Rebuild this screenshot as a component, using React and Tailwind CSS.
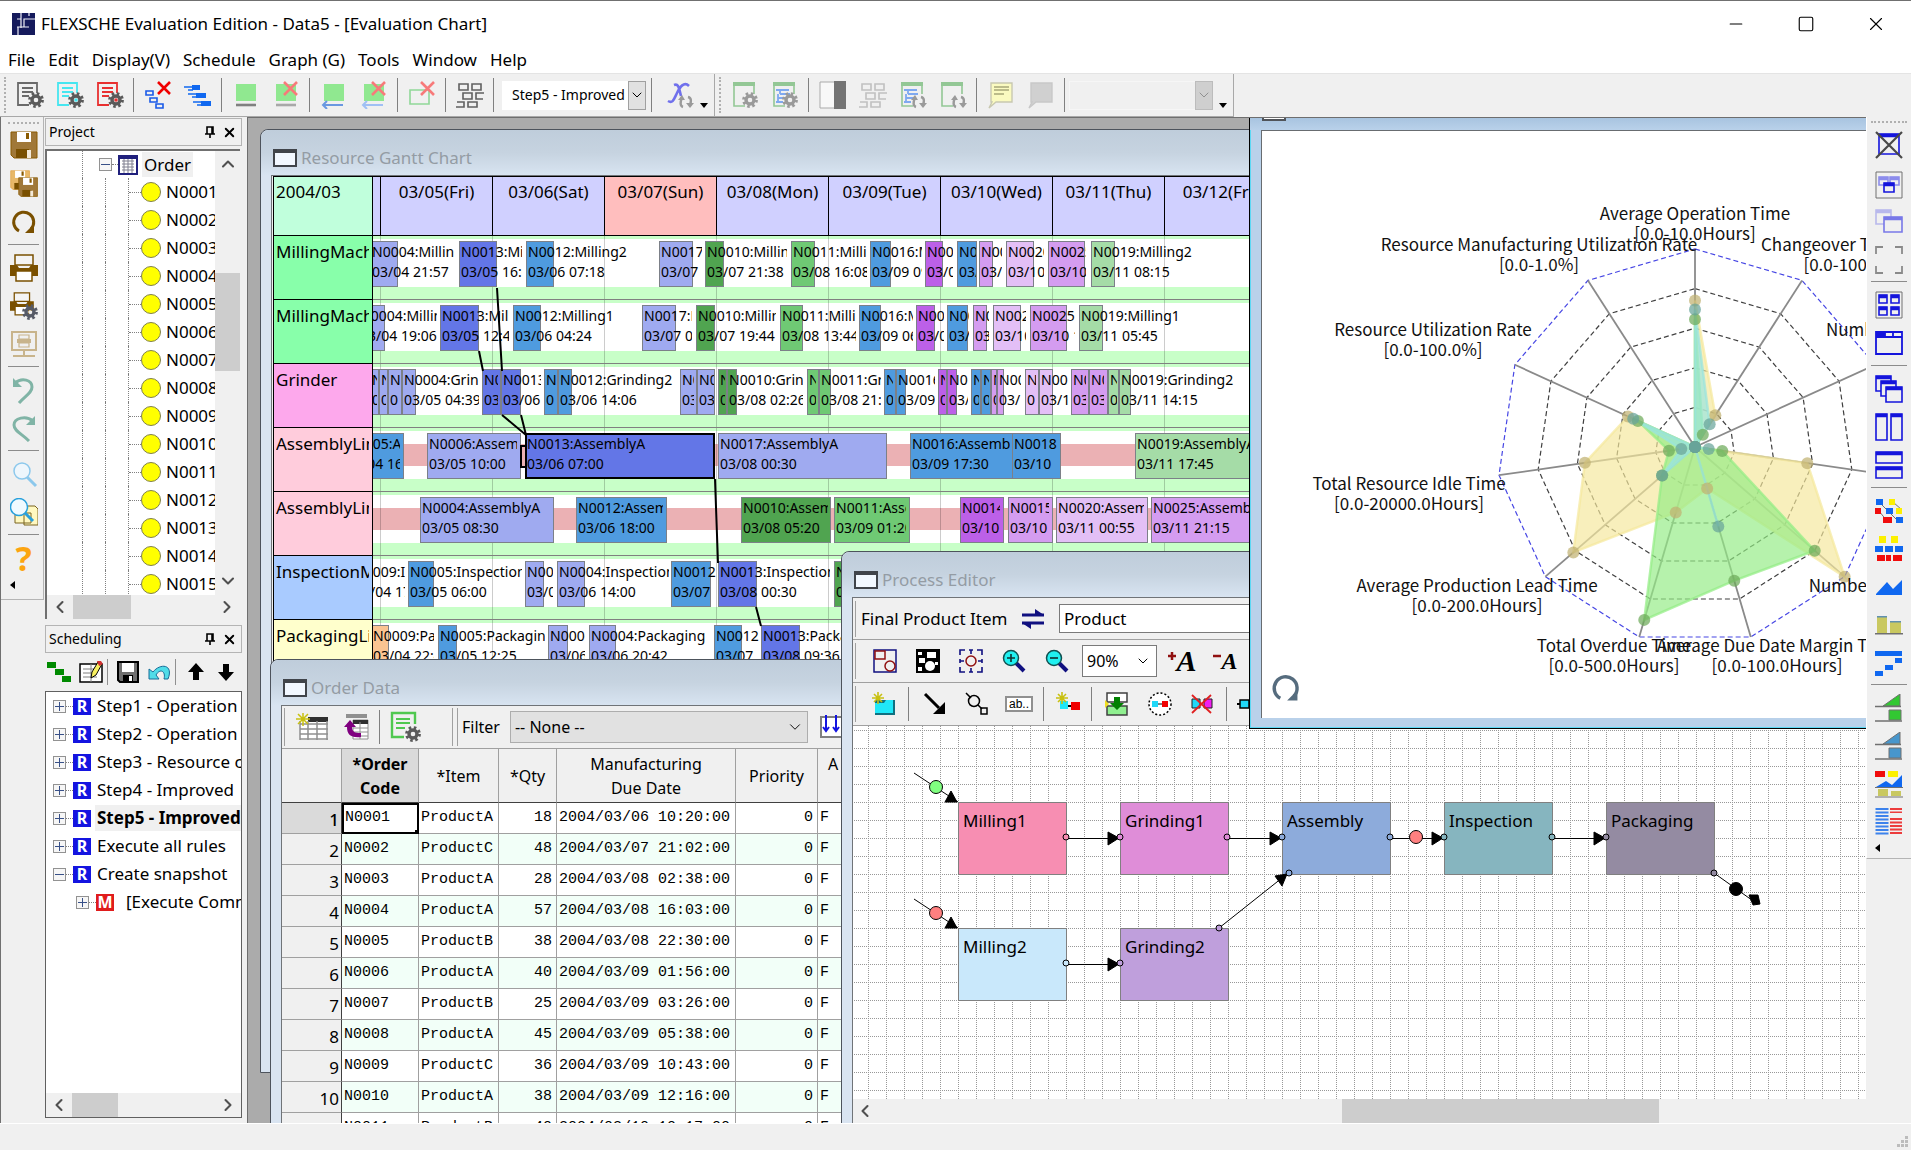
import { ChevronDown, ChevronLeft, ChevronRight, ChevronUp, Minus, Square, X } from 'lucide-react'

/* ---------- shared bits ---------- */

function Gear({ x, y, color = '#5a5a5a', hub = '#efefef' }) {
  return (
    <g transform={`translate(${x} ${y})`} fill="none" stroke={color}>
      <circle r="6.4" strokeWidth="3" strokeDasharray="2.5 2.53" />
      <circle r="4" strokeWidth="3.4" />
      <circle r="1.8" fill={hub} stroke="none" />
    </g>
  )
}

function Svg({ size = 'size-7', box = '0 0 28 28', children }) {
  return (
    <svg className={`${size} shrink-0`} viewBox={box} fill="none" aria-hidden="true">
      {children}
    </svg>
  )
}

function Tool({ label, className = 'h-[38px] w-10', children }) {
  return (
    <button type="button" title={label} aria-label={label} className={`flex shrink-0 items-center justify-center ${className}`}>
      {children}
    </button>
  )
}

function Cycle({ color = '#9a9a9a' }) {
  return (
    <g stroke={color} strokeWidth="2.4" fill={color}>
      <path d="M17 26c-3-1-3-5-1-9" fill="none" />
      <path d="M12 19l4-5 3 5z" stroke="none" />
      <path d="M22 16c4 1 3 5 2 8" fill="none" />
      <path d="M20 22h8l-4 5z" stroke="none" />
    </g>
  )
}

function RedX({ x = 15, y = 0, s = 12, color = '#f77a7a' }) {
  return <path d={`M${x} ${y}l${s} ${s}m0 -${s}l-${s} ${s}`} stroke={color} strokeWidth="2.6" />
}

/* ---------- main toolbar icons ---------- */

function DocGear({ color, hub, gear }) {
  return (
    <Svg>
      <path d="M21 12V2H2v22h11M6 7h11M6 11h11M6 15h7" stroke={color} strokeWidth="1.8" />
      <Gear x={20} y={19} hub={hub} color={gear} />
    </Svg>
  )
}

function Network({ color = '#606060' }) {
  return (
    <Svg>
      <path d="M3 3h9v6H3zM16 3h9v6h-9zM7 12h9v6H7zM28 12h-8v6h7M1 21h7v5H0M12 21h9v5h-9z" stroke={color} strokeWidth="1.6" />
    </Svg>
  )
}

function GreenBox({ base, crossed, arrow }) {
  return (
    <Svg>
      <path d="M4 3h20v17H4z" fill="#90e890" />
      {arrow ? (
        <path d="M3 24h20M7 20l-4 4 4 4" stroke={base} strokeWidth="2" />
      ) : (
        <path d="M4 24h20" stroke={base} strokeWidth="2.6" />
      )}
      {crossed && <RedX x={12} y={1} s={13} />}
    </Svg>
  )
}

function GreenWin({ gantt, cycle }) {
  return (
    <Svg>
      <path d="M23 13V2H3v23h11" stroke="#93c795" strokeWidth="1.6" />
      <path d="M2 1h22v4H2z" fill="#93c795" />
      {gantt && <path d="M5 9h13M9 13h10M9 9v4M7 17h8M5 21h7M7 13v8" stroke="#7fa9f0" strokeWidth="1.8" />}
      {cycle ? <Cycle /> : <Gear x={19} y={19} color="#9a9a9a" />}
    </Svg>
  )
}

function Bubble({ fill, stroke, lines }) {
  return (
    <Svg>
      <path d="M4 2h21v19H9l-7 6 3-6H4z" fill={fill} stroke={stroke} strokeWidth="1.4" />
      {lines && <path d="M7 6h15M7 9h15M7 13h10" stroke="#a8a878" strokeWidth="1.5" />}
    </Svg>
  )
}

function VSep() {
  return <span className="mx-[3px] h-[34px] w-0.5 shrink-0 border-l border-[#808080]" />
}

function Drop({ label, options, className, iconClass }) {
  return (
    <span className="relative flex shrink-0">
      <select aria-label={label} className={`appearance-none ${className}`}>
        {options.map((o) => (
          <option key={o}>{o}</option>
        ))}
      </select>
      <span className={`pointer-events-none absolute inset-y-0 right-0 flex items-center justify-center ${iconClass}`}>
        <ChevronDown size={16} strokeWidth={1.5} />
      </span>
    </span>
  )
}

function Grip() {
  return <span className="h-9 w-0 shrink-0 border-l-2 border-dotted border-[#b0b0b0]" />
}

function MainToolbar() {
  return (
    <div className="flex h-11 shrink-0 items-center overflow-hidden border-t border-[#e4e4e4] bg-[#f0f0f0]">
      <div className="flex h-full items-center border-r border-b border-[#a8a8a8] pl-1">
        <Grip />
        <span className="w-1" />
        <Tool label="Settings"><DocGear color="#6a6a6a" /></Tool>
        <Tool label="Display settings"><DocGear color="#46e6f0" hub="#46e6f0" /></Tool>
        <Tool label="Rule settings"><DocGear color="#e83030" hub="#e83030" /></Tool>
        <VSep />
        <Tool label="Clear links">
          <Svg>
            <path d="M2 10h7v4H2zM6 17h7v4H6zM12 23h7v4h-7z" stroke="#1a5ae8" strokeWidth="1.6" />
            <RedX x={14} y={1} s={12} color="#f00000" />
          </Svg>
        </Tool>
        <Tool label="Reschedule">
          <Svg>
            <path d="M8 4h8v5H8zM12 12h10v5H12zM17 20h10v5H17z" fill="#1068f0" />
            <path d="M0 6h8M4 9h5M4 13h8M8 16h5M9 21h9M13 24h5" stroke="#1068f0" strokeWidth="1.5" />
          </Svg>
        </Tool>
        <VSep />
        <Tool label="Assign"><GreenBox base="#808080" /></Tool>
        <Tool label="Unassign"><GreenBox base="#a8a8a8" crossed /></Tool>
        <VSep />
        <Tool label="Fix start"><GreenBox base="#6a98e0" arrow /></Tool>
        <Tool label="Unfix start"><GreenBox base="#a0c0f4" arrow crossed /></Tool>
        <VSep />
        <Tool label="Clear frame">
          <Svg>
            <path d="M2 9h19v14H2z" stroke="#90d898" strokeWidth="1.6" />
            <RedX x={13} y={1} s={13} />
          </Svg>
        </Tool>
        <VSep />
        <Tool label="Operation network"><Network /></Tool>
        <VSep />
        <span className="w-1" />
        <Drop
          label="Scheduling rule"
          options={['Step5 - Improved']}
          className="h-[29px] w-36 bg-white pl-2.5 text-sm"
          iconClass="w-[18px] border border-[#a0a0a0] bg-[#e1e1e1]"
        />
        <span className="w-0.5" />
        <VSep />
        <Tool label="Expression" className="ml-1 h-[38px] w-10">
          <Svg>
            <path d="M2 20c5 3 6-2 9-8S18 0 23 5M8 4c5-2 5 4 7 11" stroke="#7070ec" strokeWidth="2.6" />
            <Cycle />
          </Svg>
        </Tool>
        <span className="mt-5 mr-1.5 border-x-4 border-t-5 border-x-transparent border-t-black" />
      </div>
      <div className="flex h-full items-center border-r border-b border-[#a8a8a8] pl-1">
        <Grip />
        <span className="w-1" />
        <Tool label="View settings"><GreenWin /></Tool>
        <Tool label="Gantt settings"><GreenWin gantt /></Tool>
        <VSep />
        <Tool label="Contrast">
          <Svg>
            <path d="M1 1h15v26H1z" fill="#f8f8f8" stroke="#aaa" />
            <path d="M15 0h12v28H15z" fill="#747474" />
          </Svg>
        </Tool>
        <Tool label="Network view"><Network color="#c0c0c0" /></Tool>
        <Tool label="Sync Gantt"><GreenWin gantt cycle /></Tool>
        <Tool label="Sync view"><GreenWin cycle /></Tool>
        <VSep />
        <Tool label="Comment"><Bubble fill="#fafac0" stroke="#c8c8b0" lines /></Tool>
        <Tool label="Hide comment"><Bubble fill="#d0d0d0" stroke="#c8c8c8" /></Tool>
        <VSep />
        <Drop
          label="View"
          options={[' ']}
          className="h-[29px] w-36 border border-[#f6f6f6] bg-[#f0f0f0]"
          iconClass="w-[18px] border border-[#bcbcbc] bg-[#cfcfcf] text-[#909090]"
        />
        <span className="mt-5 mr-1.5 ml-1.5 border-x-4 border-t-5 border-x-transparent border-t-black" />
      </div>
    </div>
  )
}

/* ---------- left tool strip ---------- */

function HSep() {
  return <span className="mx-1 my-[3px] h-0.5 shrink-0 border-t border-[#8c8c8c]" />
}

function Floppy({ x = 0, y = 0, s = 1, light }) {
  return (
    <g transform={`translate(${x} ${y}) scale(${s})`}>
      <path d="M1 1h26v26H4l-3-3z" fill={light ? '#e8b868' : '#a07838'} stroke={light ? '#e0a040' : '#8a5a00'} />
      <path d="M7 1h14v10H7z" fill="#fff" />
      <path d="M16 2h3v6h-3z" fill="#8a5a00" />
      <path d="M6 18h13v9H6z" fill="#7a5000" />
      <path d="M17 19h4v8h-4z" fill="#f4ead8" />
    </g>
  )
}

function Printer({ x = 0, y = 0, s = 1 }) {
  return (
    <g transform={`translate(${x} ${y}) scale(${s})`}>
      <path d="M5 1h18v10H5z" fill="#f4f4f4" stroke="#7a5000" strokeWidth="1.5" />
      <path d="M0 11h7l2 3h10l2-3h7v11H0z" fill="#7a5000" />
      <path d="M6 17h16v10H6z" fill="#fff" stroke="#7a5000" strokeWidth="1.5" />
    </g>
  )
}

function Reload({ color }) {
  return (
    <>
      <path d="M9 23A10 10 0 1 1 21 21" stroke={color} strokeWidth="3" />
      <path d="M15 25h9v-9z" fill={color} />
    </>
  )
}

function LeftTools() {
  return (
    <div className="flex w-11 shrink-0 flex-col border-l border-[#707070]">
      <div className="flex flex-col border-r border-b border-[#b4b4b4] pt-[5px] pb-1 pl-[3px]">
        <span className="mx-1 h-0 border-t-2 border-dotted border-[#b0b0b0]" />
        <Tool label="Save" className="h-[41px]"><Svg><Floppy /></Svg></Tool>
        <Tool label="Save all" className="h-[38px]"><Svg><Floppy s={0.72} light /><Floppy x={8} y={7} s={0.72} /></Svg></Tool>
        <Tool label="Reload" className="h-[38px]"><Svg><Reload color="#7a5000" /></Svg></Tool>
        <HSep />
        <Tool label="Print" className="h-[38px]"><Svg><Printer /></Svg></Tool>
        <Tool label="Print settings" className="h-[38px]"><Svg><Printer s={0.85} /><Gear x={20} y={20} color="#565a66" /></Svg></Tool>
        <Tool label="Print preview" className="h-[38px]">
          <Svg>
            <g stroke="#c8b48c" strokeWidth="2">
              <path d="M2 2h24v18H2zM14 20v5M3 26h22" />
              <path d="M9 5h10v4H9zM9 13h10v4H9z" strokeWidth="1.2" />
              <path d="M7 11h14" strokeWidth="4" />
            </g>
          </Svg>
        </Tool>
        <HSep />
        <Tool label="Undo" className="h-[38px]">
          <Svg><path d="M5 7c7-6 17-3 17 4 0 6-7 9-13 16" stroke="#80b4a6" strokeWidth="3" /><path d="M3 2v9h9z" fill="#80b4a6" /></Svg>
        </Tool>
        <Tool label="Redo" className="h-[38px]">
          <Svg><path d="M23 7C16 1 4 4 4 11c0 6 8 9 15 16" stroke="#80b4a6" strokeWidth="3" /><path d="M25 2v9h-9z" fill="#80b4a6" /></Svg>
        </Tool>
        <HSep />
        <Tool label="Find" className="h-[38px]">
          <Svg><circle cx="12" cy="11" r="8" fill="#eef6fc" stroke="#8cc8ec" strokeWidth="1.5" /><path d="M17 17l9 9" stroke="#8cc8ec" strokeWidth="3" /></Svg>
        </Tool>
        <Tool label="Find in data" className="h-[38px]">
          <Svg>
            <path d="M14 8h11l3 3v16H14zM5 15h16v10H5z" fill="#fff8c0" stroke="#7a6420" />
            <circle cx="9" cy="9" r="8.5" fill="#f0faff" stroke="#28a0dc" strokeWidth="1.5" /><path d="M15 15l8 8" stroke="#28a0dc" strokeWidth="3" />
          </Svg>
        </Tool>
        <HSep />
        <Tool label="Help" className="h-[38px] text-[34px] font-bold text-[#fca510]">?</Tool>
        <span className="mt-1 mb-1.5 ml-1.5 w-0 border-y-4 border-r-5 border-y-transparent border-r-black" />
      </div>
    </div>
  )
}

/* ---------- docked panels ---------- */

function PanelHead({ title }) {
  return (
    <div className="flex h-7 shrink-0 items-center border border-[#b4b4b4] bg-[#f0f0f0] pl-[3px]">
      <h2 className="flex-1 text-sm">{title}</h2>
      <button type="button" aria-label="Pin" className="mr-1">
        <Svg size="size-4" box="0 0 16 16">
          <path d="M5 3h6v7H5zM3 10h10M8 10v4M10 3v7" stroke="#000" strokeWidth="1.6" />
        </Svg>
      </button>
      <button type="button" aria-label="Close panel" className="mr-1"><X size={15} strokeWidth={3} /></button>
    </div>
  )
}

function Expander({ open }) {
  return (
    <button type="button" aria-label={open ? 'Collapse' : 'Expand'} className="flex size-[13px] shrink-0 items-center justify-center border border-[#929292] bg-[#f6f6f6]">
      <Svg size="size-[11px]" box="0 0 11 11">
        <path d={open ? 'M1 5.5h9' : 'M1 5.5h9M5.5 1v9'} stroke="#385088" />
      </Svg>
    </button>
  )
}

function HScroll({ thumb, pad = 'w-6' }) {
  return (
    <div className="flex h-6 shrink-0 items-center bg-[#f0f0f0] text-[#505050]">
      <button type="button" aria-label="Scroll left" className={`flex justify-center ${pad}`}><ChevronLeft size={20} strokeWidth={2.5} /></button>
      <span className="relative h-full flex-1"><span className={`absolute inset-y-0 bg-[#cdcdcd] ${thumb}`} /></span>
      <button type="button" aria-label="Scroll right" className={`flex justify-center ${pad}`}><ChevronRight size={20} strokeWidth={2.5} /></button>
    </div>
  )
}

const orders = Array.from({ length: 15 }, (_, i) => 'N' + String(i + 1).padStart(4, '0'))

function ProjectPanel() {
  return (
    <section className="flex h-[501px] shrink-0 flex-col">
      <PanelHead title="Project" />
      <div className="mt-[3px] mr-0.5 flex min-h-0 flex-1 flex-col border-t-2 border-l-2 border-[#707070] bg-white">
        <div className="flex min-h-0 flex-1">
          <ul className="min-w-0 flex-1 overflow-hidden text-[17px]">
            <li className="flex h-[27px] items-center">
              <span className="w-[35px] shrink-0" />
              <span className="h-full w-[17px] shrink-0 border-l border-dotted border-[#808080]" />
              <Expander open />
              <span className="w-1.5 shrink-0 border-t border-dotted border-[#808080]" />
              <Svg size="size-5" box="0 0 20 20">
                <path d="M1 1h18v18H1z" fill="#fff" stroke="#20207c" strokeWidth="2" />
                <path d="M2 3h16" stroke="#20207c" strokeWidth="2" />
                <path d="M4 6h12M4 9h12M4 12h12M4 15h12M6 4v14M10 4v14M14 4v14" stroke="#808090" />
              </Svg>
              <span className="ml-1 bg-[#f0f0f0] px-0.5">Order</span>
            </li>
            {orders.map((o) => (
              <li key={o} className="flex h-7 items-center">
                <span className="w-[35px] shrink-0" />
                <span className="h-full w-[23px] shrink-0 border-l border-dotted border-[#808080]" />
                <span className="h-full w-[23px] shrink-0 border-l border-dotted border-[#808080]" />
                <span className="h-full w-px shrink-0 border-l border-dotted border-[#808080]" />
                <span className="w-3 shrink-0 border-t border-dotted border-[#808080]" />
                <span className="size-5 shrink-0 rounded-full border border-[#80804c] bg-[#ff0]" />
                <span className="ml-[5px]">{o}</span>
              </li>
            ))}
          </ul>
          <div className="flex w-[25px] shrink-0 flex-col bg-[#f0f0f0] text-[#505050]">
            <button type="button" aria-label="Scroll up" className="flex h-6 items-center justify-center pt-0.5"><ChevronUp size={20} strokeWidth={2.5} /></button>
            <span className="relative flex-1"><span className="absolute inset-x-0 top-1/4 h-1/4 bg-[#cdcdcd]" /></span>
            <button type="button" aria-label="Scroll down" className="flex h-7 items-center justify-center"><ChevronDown size={20} strokeWidth={2.5} /></button>
          </div>
        </div>
        <HScroll thumb="left-0 w-[58px]" pad="w-[26px]" />
      </div>
    </section>
  )
}

const rules = [
  'Step1 - Operation',
  'Step2 - Operation',
  'Step3 - Resource c',
  'Step4 - Improved',
  'Step5 - Improved',
  'Execute all rules',
  'Create snapshot',
]

function SchedulingPanel() {
  return (
    <section className="mt-1.5 mb-[5px] flex min-h-0 flex-1 flex-col">
      <PanelHead title="Scheduling" />
      <div className="flex h-[38px] shrink-0 items-center justify-between px-0.5">
        <Tool label="Run rules" className="w-6">
          <Svg size="size-6" box="0 0 24 24"><path d="M0 2h9v6H0zM8 9h9v6H8zM15 16h9v6h-9z" fill="#008a00" /></Svg>
        </Tool>
        <Tool label="Edit rule" className="ml-1 w-7">
          <Svg size="size-6" box="0 0 24 24">
            <path d="M1 4h22v18H1z" fill="#fff" stroke="#000" strokeWidth="1.5" />
            <path d="M4 9h12M4 13h10M4 17h14M12 4v18" stroke="#808080" />
            <path d="M12 18l1-6 6-10 4 2-6 11z" fill="#f8f060" stroke="#000" />
            <path d="M18 1h4l2 3-4 2z" fill="#d03030" />
          </Svg>
        </Tool>
        <span className="h-[26px] w-px bg-[#909090]" />
        <Tool label="Save rule" className="ml-1 w-7">
          <Svg size="size-6" box="0 0 24 24">
            <path d="M2 2h20v20H4l-2-2z" fill="#707070" stroke="#000" strokeWidth="2" />
            <path d="M6 3h12v9H6z" fill="#fff" /><path d="M7 15h10v7H7z" fill="#000" /><path d="M13 16h3v5h-3z" fill="#fff" />
          </Svg>
        </Tool>
        <Tool label="Revert rule" className="w-7">
          <Svg size="size-6" box="0 0 24 24">
            <path d="M2 9v10h10l-3-4C13 8 19 11 17 19h4C27 4 13 3 6 12z" fill="#50dce8" stroke="#186c98" />
          </Svg>
        </Tool>
        <span className="h-[26px] w-px bg-[#909090]" />
        <Tool label="Move up" className="ml-1 w-7"><Svg size="size-6" box="0 0 24 24"><path d="M12 3l8 9h-5v8H9v-8H4z" fill="#000" /></Svg></Tool>
        <Tool label="Move down" className="w-7"><Svg size="size-6" box="0 0 24 24"><path d="M12 21l8-9h-5V4H9v8H4z" fill="#000" /></Svg></Tool>
      </div>
      <div className="flex min-h-0 flex-1 flex-col justify-between border border-[#606060] bg-white">
        <ul className="overflow-hidden text-[17px]">
          {rules.map((r, i) => (
            <li key={r} className="flex h-7 items-center whitespace-nowrap">
              <span className="w-[7px] shrink-0" />
              <Expander open={i === 6} />
              <span className="w-[7px] shrink-0 border-t border-dotted border-[#808080]" />
              <span className="flex h-[17px] w-[18px] shrink-0 items-center justify-center bg-[#1414e0] text-base font-bold text-white">R</span>
              <span className={i === 4 ? 'ml-1 flex-1 bg-[#f0f0f0] pl-0.5 font-bold' : 'ml-1 pl-0.5'}>{r}</span>
            </li>
          ))}
          <li className="flex h-7 items-center whitespace-nowrap">
            <span className="w-[30px] shrink-0" />
            <Expander />
            <span className="w-[7px] shrink-0 border-t border-dotted border-[#808080]" />
            <span className="flex h-[17px] w-[18px] shrink-0 items-center justify-center bg-[#e01c1c] text-base font-bold text-white">M</span>
            <span className="ml-3">[Execute Comm</span>
          </li>
        </ul>
        <HScroll thumb="left-0 w-[46px]" pad="w-[26px]" />
      </div>
    </section>
  )
}

/* ---------- MDI child windows ---------- */

function MdiWindow({ title, place, children }) {
  return (
    <section className={`absolute flex flex-col rounded-t-lg border border-[#4d535c] bg-[#d9e4f1] ${place}`}>
      <header className="flex h-[45px] shrink-0 items-center gap-1 rounded-t-lg bg-linear-to-b from-[#bfcddb] via-[#c6d3e0] to-[#d8e4f1] pt-2.5 pl-3">
        <span className="h-[18px] w-6 border-2 border-t-4 border-[#40444a] bg-[#f2f8ff]" />
        <h2 className="text-[17px] text-[#949ca4]">{title}</h2>
      </header>
      <div className="ml-[10px] flex min-h-0 flex-1 flex-col overflow-hidden border-t border-l border-[#707478] bg-[#f0f0f0]">{children}</div>
    </section>
  )
}

const LAV = '#9faaf0'
const IND = '#6376e7'
const BLU = '#4f9bdf'
const DGR = '#50a450'
const GRN = '#6fc974'
const PUR = '#bc60e8'
const VIO = '#d49cf0'
const PIN = '#e3bff6'
const LGR = '#a5dca7'
const ORA = '#fac492'

const days = ['03/05(Fri)', '03/06(Sat)', '03/07(Sun)', '03/08(Mon)', '03/09(Tue)', '03/10(Wed)', '03/11(Thu)', '03/12(Fri)']

// bar: [left, bar width, clip width, colour, first line, second line]
const resources = [
  { name: 'MillingMachine1', bg: 'bg-[#88ffaa]', bars: [
    [-3, 28, 82, LAV, 'N0004:Milling2', '03/04 21:57'], [86, 38, 61, IND, 'N0013:Milling2', '03/05 16:09'], [153, 28, 120, BLU, 'N0012:Milling2', '03/06 07:18'],
    [286, 34, 41, LAV, 'N0017:Milling2', '03/07 09:10'], [332, 19, 80, DGR, 'N0010:Milling2', '03/07 21:38'], [418, 24, 74, GRN, 'N0011:Milling2', '03/08 16:08'],
    [497, 21, 50, BLU, 'N0016:Milling2', '03/09 09:20'], [552, 18, 26, PUR, 'N0014:Milling2', '03/09 20:00'], [584, 20, 17, BLU, 'N0018:Milling2', '03/10 03:00'],
    [606, 14, 21, VIO, 'N0015:Milling2', '03/10 07:00'], [633, 28, 36, PIN, 'N0020:Milling2', '03/10 13:00'], [675, 37, 36, VIO, 'N0025:Milling2', '03/10 22:00'],
    [718, 24, 120, LGR, 'N0019:Milling2', '03/11 08:15'],
  ] },
  { name: 'MillingMachine2', bg: 'bg-[#88ffaa]', bars: [
    [-15, 27, 77, LAV, 'N0004:Milling1', '03/04 19:06'], [67, 39, 67, IND, 'N0013:Milling1', '03/05 12:40'], [140, 28, 120, BLU, 'N0012:Milling1', '03/06 04:24'],
    [269, 34, 48, LAV, 'N0017:Milling1', '03/07 07:00'], [323, 19, 78, DGR, 'N0010:Milling1', '03/07 19:44'], [407, 23, 74, GRN, 'N0011:Milling1', '03/08 13:44'],
    [486, 22, 52, BLU, 'N0016:Milling1', '03/09 06:00'], [543, 19, 26, PUR, 'N0014:Milling1', '03/09 18:00'], [574, 21, 20, BLU, 'N0018:Milling1', '03/10 01:00'],
    [600, 14, 14, VIO, 'N0015:Milling1', '03/10 04:00'], [620, 28, 31, PIN, 'N0020:Milling1', '03/10 10:00'], [657, 37, 43, VIO, 'N0025:Milling1', '03/10 18:00'],
    [706, 24, 120, LGR, 'N0019:Milling1', '03/11 05:45'],
  ] },
  { name: 'Grinder', bg: 'bg-[#fda8ec]', bars: [
    [-3, 9, 5, LAV, 'N', '0'], [6, 9, 5, LAV, 'N', '0'], [15, 14, 10, LAV, 'N', '0'], [29, 14, 75, LAV, 'N0004:Grinding', '03/05 04:39'],
    [109, 19, 14, IND, 'N0013', '03/05'], [128, 20, 38, IND, 'N0013:', '03/06 02'], [171, 14, 10, BLU, 'N', '0'], [185, 14, 125, BLU, 'N0012:Grinding2', '03/06 14:06'],
    [307, 17, 12, LAV, 'N0', '03'], [324, 18, 15, LAV, 'N00', '03'], [345, 9, 5, DGR, 'N', '0'], [354, 10, 74, DGR, 'N0010:Grinding', '03/08 02:26'],
    [434, 12, 7, GRN, 'N', '0'], [446, 12, 60, GRN, 'N0011:Grinding', '03/08 21:10'], [511, 12, 7, BLU, 'N', '0'], [523, 10, 37, BLU, 'N0016:', '03/09 12'],
    [565, 9, 5, PUR, 'N', '0'], [574, 10, 19, PUR, 'N0014', '03/10'], [598, 10, 6, BLU, 'N', '0'], [608, 10, 6, BLU, 'N', '0'],
    [618, 6, 3, VIO, 'N', '0'], [624, 7, 22, VIO, 'N0015', '03/10'], [652, 14, 9, PIN, 'N', '0'], [666, 14, 27, PIN, 'N0020', '03/11'],
    [698, 18, 13, VIO, 'N00', '03'], [716, 19, 13, VIO, 'N00', '03'], [735, 11, 7, LGR, 'N', '0'], [746, 12, 125, LGR, 'N0019:Grinding2', '03/11 14:15'],
  ] },
  { name: 'AssemblyLine1', bg: 'bg-[#ffccdc]', band: true, bars: [
    [-29, 60, 54, BLU, 'N0005:AssemblyB', '03/04 16:00'], [54, 94, 88, LAV, 'N0006:AssemblyA', '03/05 10:00'], [152, 190, 186, IND, 'N0013:AssemblyA', '03/06 07:00', true],
    [345, 169, 166, LAV, 'N0017:AssemblyA', '03/08 00:30'], [537, 103, 98, BLU, 'N0016:AssemblyB', '03/09 17:30'], [639, 49, 43, BLU, 'N0018:', '03/10 '],
    [762, 160, 156, LGR, 'N0019:AssemblyA', '03/11 17:45'],
  ] },
  { name: 'AssemblyLine2', bg: 'bg-[#ffccdc]', band: true, bars: [
    [47, 134, 131, LAV, 'N0004:AssemblyA', '03/05 08:30'], [203, 91, 85, BLU, 'N0012:AssemblyB', '03/06 18:00'], [368, 90, 85, DGR, 'N0010:AssemblyC', '03/08 05:20'],
    [461, 76, 70, GRN, 'N0011:AssemblyC', '03/09 01:20'], [587, 44, 38, PUR, 'N0014:', '03/10'], [635, 45, 39, VIO, 'N0015:', '03/10'],
    [683, 92, 86, PIN, 'N0020:AssemblyC', '03/11 00:55'], [778, 160, 156, VIO, 'N0025:AssemblyC', '03/11 21:15'],
  ] },
  { name: 'InspectionMachine', bg: 'bg-[#a9cbff]', bars: [
    [-21, 10, 51, LAV, 'N0009:Inspection', '03/04 17:40'], [35, 26, 112, BLU, 'N0005:Inspection', '03/05 06:00'], [152, 19, 26, LAV, 'N0006', '03/06'],
    [184, 28, 110, LAV, 'N0004:Inspection', '03/06 14:00'], [298, 40, 43, BLU, 'N0012', '03/07'], [345, 39, 110, IND, 'N0013:Inspection', '03/08 00:30'],
    [461, 30, 60, DGR, 'N0010', '03/09'],
  ] },
  { name: 'PackagingLine', bg: 'bg-[#ffffcc]', bars: [
    [-2, 18, 61, ORA, 'N0009:Packaging', '03/04 22:40'], [65, 19, 105, BLU, 'N0005:Packaging', '03/05 12:25'], [175, 20, 35, LAV, 'N0006', '03/06'],
    [216, 27, 120, LAV, 'N0004:Packaging', '03/06 20:42'], [341, 28, 44, BLU, 'N0012', '03/07'], [388, 39, 120, IND, 'N0013:Packaging', '03/08 09:36'],
  ] },
]

function DayGrid() {
  return (
    <div className="absolute inset-0 flex">
      <span className="w-[7px] shrink-0" />
      {days.map((d) => (
        <span key={d} className="w-28 shrink-0 border-l border-black/20" />
      ))}
    </div>
  )
}

function GanttWindow() {
  return (
    <MdiWindow title="Resource Gantt Chart" place="left-3 top-[11px] bottom-[50px] w-[1100px]">
      <div className="relative ml-px flex-1 border-t border-l border-black bg-white">
        <div className="flex h-[59px] border-b border-black text-[17px]">
          <div className="w-[99px] shrink-0 border-r border-black bg-[#c0ffdc] pt-0.5 pl-0.5">2004/03</div>
          <div className="w-[7px] shrink-0 bg-[#d0d0ff]" />
          {days.map((d) => (
            <div key={d} className={`w-28 shrink-0 border-l border-black pt-0.5 text-center ${d.includes('Sun') ? 'bg-[#ffbebe]' : 'bg-[#d0d0ff]'}`}>{d}</div>
          ))}
        </div>
        {resources.map((r) => (
          <div key={r.name} className="flex h-16">
            <div className={`w-[99px] shrink-0 overflow-hidden border-r border-b border-black pt-[3px] pr-[3px] pl-0.5 text-[17px] ${r.bg}`}>
              <span className="block overflow-hidden">{r.name}</span>
            </div>
            <div className="relative flex-1 overflow-hidden border-b border-[#808080] bg-[#c8ffc8]">
              <div className="mt-[3px] h-12 bg-white" />
              {r.band && <div className="absolute inset-x-0 top-4 h-[22px] bg-[#ebb1b4]" />}
              <DayGrid />
              {r.bars.map(([left, width, clip, color, a, b, selected], i) => (
                <div key={i} className="absolute top-[5px] h-[46px]" style={{ left }}>
                  <div className={selected ? 'h-full border-2 border-black' : 'h-full border border-[#7c8088]'} style={{ width, background: color }} />
                  <div className="absolute top-px left-0.5 overflow-hidden text-sm/5 whitespace-pre" style={{ width: clip }}>
                    {a}<br />{b}
                  </div>
                </div>
              ))}
            </div>
          </div>
        ))}
        <svg className="absolute top-0 left-0 h-[480px] w-[600px]" fill="none" stroke="#000" strokeWidth="2" aria-hidden="true">
          <path d="M223 111L228 194M205 174L209 194M228 238L252 258M247 238L252 258M441 302L444 386M482 430L487 449" />
          <path d="M251 269H247V290H251" />
        </svg>
      </div>
    </MdiWindow>
  )
}

const rows = [
  ['N0001', 'ProductA', 18, '2004/03/06 10:20:00'],
  ['N0002', 'ProductC', 48, '2004/03/07 21:02:00'],
  ['N0003', 'ProductA', 28, '2004/03/08 02:38:00'],
  ['N0004', 'ProductA', 57, '2004/03/08 16:03:00'],
  ['N0005', 'ProductB', 38, '2004/03/08 22:30:00'],
  ['N0006', 'ProductA', 40, '2004/03/09 01:56:00'],
  ['N0007', 'ProductB', 25, '2004/03/09 03:26:00'],
  ['N0008', 'ProductA', 45, '2004/03/09 05:38:00'],
  ['N0009', 'ProductC', 36, '2004/03/09 10:43:00'],
  ['N0010', 'ProductA', 38, '2004/03/09 12:16:00'],
  ['N0011', 'ProductB', 40, '2004/03/10 10:17:00'],
]

function OrderWindow() {
  const th = 'border-r border-b border-[#a0a0a0] border-b-[#404040] font-normal'
  const td = 'border-r border-b border-[#a0a0a0] px-0.5'
  return (
    <MdiWindow title="Order Data" place="left-[22px] top-[541px] -bottom-10 w-[640px]">
      <div className="flex h-[43px] shrink-0 items-center border-b border-[#a0a0a0]">
        <span className="ml-0.5 h-[38px] w-1.5 border-l border-[#a0a0a0]" />
        <Tool label="New record" className="ml-0.5 h-[38px] w-10">
          <Svg size="h-7 w-8" box="0 0 32 28">
            <path d="M4 6h27v21H4z" fill="#fff" /><path d="M12 4h20v5H12z" fill="#303030" />
            <path d="M4 11h28M4 16h28M4 21h28M4 26h28M4 8v19M12 8v19M21 8v19M31 8v19" stroke="#909090" strokeWidth="1.5" />
            <path d="M7 0v13M0 6h14M2 1l10 10M12 1L2 11" stroke="#c8c010" strokeWidth="1.5" />
          </Svg>
        </Tool>
        <Tool label="Restore record" className="ml-1 h-[38px] w-10">
          <Svg>
            <path d="M4 1h21v4H4z" fill="#909090" /><path d="M11 7h15v19H11z" fill="#fff" stroke="#909090" /><path d="M11 7h15v4H11z" fill="#303030" />
            <path d="M11 15h15M11 19h15M11 23h15M18 9v17" stroke="#909090" />
            <path d="M2 14l6-7 6 7h-4c0 5 3 6 9 6v4C9 25 5 22 5 14z" fill="#800080" />
          </Svg>
        </Tool>
        <VSep />
        <Tool label="Table settings" className="h-[38px] w-11">
          <Svg size="size-8" box="0 0 32 32">
            <path d="M25 13V2H2v24h12" stroke="#50c850" strokeWidth="2.4" /><path d="M6 8h14M6 12h14M6 17h9" stroke="#50c850" strokeWidth="2" />
            <Gear x={23} y={23} />
          </Svg>
        </Tool>
        <span className="ml-6 h-[38px] w-1.5 border-x border-[#a0a0a0]" />
        <label htmlFor="filter" className="mr-2.5 ml-1 text-base">Filter</label>
        <span className="relative flex shrink-0">
          <select id="filter" className="h-8 w-[298px] appearance-none border border-[#adadad] bg-[#e1e1e1] pl-1 text-base">
            <option>-- None --</option>
          </select>
          <ChevronDown size={18} strokeWidth={1.25} className="pointer-events-none absolute top-[7px] right-1" />
        </span>
        <Tool label="Apply filter" className="ml-3 h-[38px] w-7">
          <Svg><path d="M1 4h26v20H1z" fill="#fff" stroke="#808080" strokeWidth="2" /><path d="M6 2v16M3 14l3 4 3-4M16 2v16M13 14l3 4 3-4" stroke="#1414e0" strokeWidth="2" /></Svg>
        </Tool>
      </div>
      <table className="w-[640px] table-fixed border-separate border-spacing-0 bg-white">
        <colgroup>
          <col className="w-[60px]" /><col className="w-[77px]" /><col className="w-20" /><col className="w-[58px]" />
          <col className="w-[179px]" /><col className="w-[82px]" /><col />
        </colgroup>
        <thead>
          <tr className="h-[54px] bg-[#f0f0f0] text-base/6">
            <th className={th} />
            <th className="border-r border-b border-[#a0a0a0] border-b-[#404040] bg-[#dadada] font-bold">*Order<br />Code</th>
            <th className={th}>*Item</th>
            <th className={th}>*Qty</th>
            <th className={th}>Manufacturing<br />Due Date</th>
            <th className={th}>Priority</th>
            <th className={`${th} pb-6 pl-2.5 text-left`}>A</th>
          </tr>
        </thead>
        <tbody>
          {rows.map(([code, item, qty, due], i) => (
            <tr key={code} className="h-[31px] font-['Liberation_Mono',monospace] text-[15px] even:bg-[#f2fff8]">
              <th className={`border-r border-b border-[#a0a0a0] border-r-[#404040] pt-1 pr-0.5 text-right font-['Noto_Sans',sans-serif] text-[17px]/6 ${i === 0 ? 'bg-[#dadada] font-medium' : 'bg-[#f0f0f0] font-normal'}`}>{i + 1}</th>
              {i === 0 ? (
                <td className="relative border-2 border-black px-px">
                  {code}
                  <span className="absolute -right-0.5 -bottom-0.5 size-1 bg-black" />
                </td>
              ) : (
                <td className={td}>{code}</td>
              )}
              <td className={td}>{item}</td>
              <td className={`${td} pr-1 text-right`}>{qty}</td>
              <td className={td}>{due}</td>
              <td className={`${td} pr-1 text-right`}>0</td>
              <td className={td}>F</td>
            </tr>
          ))}
        </tbody>
      </table>
    </MdiWindow>
  )
}

const nodes = [
  { name: 'Milling1', x: 105, y: 76, bg: 'bg-[#f78eb2]' },
  { name: 'Grinding1', x: 267, y: 76, bg: 'bg-[#df8dd8]' },
  { name: 'Assembly', x: 429, y: 76, bg: 'bg-[#8dabdb]' },
  { name: 'Inspection', x: 591, y: 76, bg: 'bg-[#86b5bf]' },
  { name: 'Packaging', x: 753, y: 76, bg: 'bg-[#948ba2]' },
  { name: 'Milling2', x: 105, y: 202, bg: 'bg-[#c9e8fb]' },
  { name: 'Grinding2', x: 267, y: 202, bg: 'bg-[#bf9fdc]' },
]

function Star() {
  return <path d="M6 0v12M0 6h12M2 2l8 8M10 2l-8 8" stroke="#c8c010" strokeWidth="1.6" />
}

function ProcessWindow() {
  return (
    <MdiWindow title="Process Editor" place="left-[593px] top-[433px] right-[-26px] bottom-[-1px]">
      <div className="flex h-[42px] shrink-0 items-center border-b border-[#a0a0a0]">
        <span className="ml-0.5 h-9 w-1.5 border-l border-[#a0a0a0]" />
        <label htmlFor="item" className="w-[160px] text-[17px]">Final Product Item</label>
        <Svg size="h-5 w-6" box="0 0 24 20"><path d="M1 6h22M1 14h22" stroke="#101080" strokeWidth="3" /><path d="M14 0l9 6h-9zM10 20l-9-6h9z" fill="#101080" /></Svg>
        <input id="item" defaultValue="Product" className="ml-3.5 h-[29px] w-80 border border-[#7a7a7a] bg-white pl-1 text-[17px]" />
      </div>
      <div className="flex h-[43px] shrink-0 items-center border-b border-[#a0a0a0]">
        <span className="ml-0.5 h-9 w-2 border-l border-[#a0a0a0]" />
        <Tool label="Fit shapes" className="w-[43px]">
          <Svg size="size-6" box="0 0 24 24"><path d="M1 1h22v22H1z" stroke="#101080" strokeWidth="1.5" /><path d="M2 2h10v8H2z" stroke="#901010" strokeWidth="1.5" /><circle cx="17" cy="17" r="5" stroke="#901010" strokeWidth="1.5" /></Svg>
        </Tool>
        <Tool label="Grid" className="w-[43px]">
          <Svg size="size-6" box="0 0 24 24"><path d="M0 0h24v24H0z" fill="#000" /><path d="M2 3h4v3H2zM11 3h9v6h-9zM3 9h6v5H3zM2 18h4v4H2zM19 13h3v3h-3z" fill="#fff" /><circle cx="14" cy="17" r="5" fill="#fff" /></Svg>
        </Tool>
        <Tool label="Center" className="w-[43px]">
          <Svg size="size-6" box="0 0 24 24"><path d="M1 6V1h5M18 1h5v5M23 18v5h-5M6 23H1v-5M10 1h4M10 23h4M1 10v4M23 10v4M12 1v4M12 19v4M1 12h4M19 12h4" stroke="#101080" strokeWidth="1.6" /><circle cx="12" cy="12" r="5" stroke="#901010" strokeWidth="1.5" /></Svg>
        </Tool>
        {['Zoom in', 'Zoom out'].map((z, i) => (
          <Tool key={z} label={z} className="w-[43px]">
            <Svg size="size-6" box="0 0 24 24"><path d="M14 14l8 8" stroke="#101080" strokeWidth="4" /><circle cx="9" cy="9" r="7.5" fill="#20f0f0" stroke="#105050" strokeWidth="1.5" /><path d={i ? 'M5 9h8' : 'M5 9h8M9 5v8'} stroke="#103030" strokeWidth="1.6" /></Svg>
          </Tool>
        ))}
        <Drop label="Zoom" options={['90%']} className="ml-1 h-8 w-[75px] border border-[#7a7a7a] bg-white pl-1 text-base" iconClass="w-7" />
        <Tool label="Larger text" className="ml-1 h-9 w-[43px] font-['Liberation_Serif',serif] text-[30px]/8 font-bold italic"><Svg size="size-2 mb-2.5" box="0 0 8 8"><path d="M0 4h8M4 0v8" stroke="#901010" strokeWidth="2.5" /></Svg>A</Tool>
        <Tool label="Smaller text" className="h-9 w-[43px] font-['Liberation_Serif',serif] text-2xl/8 font-bold italic"><Svg size="size-2 mb-2.5" box="0 0 8 8"><path d="M0 4h8" stroke="#901010" strokeWidth="2.5" /></Svg>A</Tool>
      </div>
      <div className="flex h-[43px] shrink-0 items-center border-b border-[#a0a0a0]">
        <span className="ml-0.5 h-9 w-[7px] border-l border-[#a0a0a0]" />
        <Tool label="New process" className="w-[43px]">
          <Svg size="size-6" box="0 0 24 24"><path d="M3 8h20v15H3z" fill="#107080" /><path d="M3 11h9l2-3h7v13H3z" fill="#20e8f8" /><Star /></Svg>
        </Tool>
        <VSep />
        <Tool label="Link" className="w-[43px]"><Svg size="size-6" box="0 0 24 24"><path d="M2 2l14 14" stroke="#000" strokeWidth="3" /><path d="M22 10v12H10z" fill="#000" /></Svg></Tool>
        <Tool label="Item" className="w-[42px]"><Svg size="size-6" box="0 0 24 24"><path d="M1 1l5 5M13 13l4 4" stroke="#000" strokeWidth="1.5" /><circle cx="9" cy="9" r="5.5" stroke="#000" strokeWidth="1.5" /><path d="M16 16h6v6h-6z" stroke="#000" strokeWidth="1.5" /></Svg></Tool>
        <Tool label="Text" className="w-[42px]"><span className="border-2 border-[#909090] bg-white px-0.5 font-['Liberation_Sans',sans-serif] text-xs/3">ab..</span></Tool>
        <VSep />
        <Tool label="New link" className="w-10"><Svg size="size-6" box="0 0 24 24"><path d="M4 9h8v8H4z" fill="#20e8f8" /><path d="M12 14h5" stroke="#000" strokeWidth="2" /><path d="M15 10h9v8h-9z" fill="#f00000" /><Star /></Svg></Tool>
        <VSep />
        <Tool label="Insert" className="w-[42px]"><Svg size="size-6" box="0 0 24 24"><path d="M2 1h20v9H2z" fill="#fff" stroke="#404040" strokeWidth="1.5" /><path d="M2 14h20v9H2z" fill="#90f090" stroke="#404040" strokeWidth="1.5" /><path d="M9 5h6v6h4l-7 7-7-7h4z" fill="#008000" /><path d="M0 8l4 4-4 4z" fill="#f0e020" /></Svg></Tool>
        <Tool label="Group" className="w-[43px]"><Svg size="size-6" box="0 0 24 24"><circle cx="12" cy="12" r="11" fill="#fff" stroke="#000" strokeDasharray="2 2" strokeWidth="1.5" /><path d="M4 9h6v6H4z" fill="#20d8f8" /><path d="M10 12h4" stroke="#000" /><path d="M14 9h6v6h-6z" fill="#f00000" /></Svg></Tool>
        <Tool label="Delete link" className="w-[42px]"><Svg size="size-6" box="0 0 24 24"><path d="M2 7h8v9H2z" fill="#20d8f8" stroke="#202020" /><path d="M14 7h8v9h-8z" fill="#f020f0" stroke="#202020" /><path d="M2 3l19 18M21 3L2 21" stroke="#e02020" strokeWidth="1.8" /></Svg></Tool>
        <VSep />
        <Tool label="Align" className="w-9"><Svg size="size-6" box="0 0 24 24"><path d="M0 12h5" stroke="#000" strokeWidth="2" /><path d="M3 8h9v8H3z" fill="#20d8f8" stroke="#000" strokeWidth="1.5" /></Svg></Tool>
      </div>
      <div className="relative min-h-0 flex-1 bg-white">
        <svg className="absolute inset-0 size-full" aria-hidden="true">
          <pattern id="grid" x="15" y="4" width="18" height="18" patternUnits="userSpaceOnUse">
            <path d="M0 .5h18M.5 0v18" stroke="#989898" strokeDasharray="1 1" fill="none" />
          </pattern>
          <rect width="100%" height="100%" fill="url(#grid)" />
        </svg>
        {nodes.map((n) => (
          <div key={n.name} className={`absolute h-[73px] w-[109px] border border-[#808080] pt-[5px] pl-1 text-[17px] ${n.bg}`} style={{ left: n.x, top: n.y }}>{n.name}</div>
        ))}
        <svg className="absolute inset-0 size-full" stroke="#000" aria-hidden="true">
          <path d="M213 112.5h48M375 112.5h48M537 112.5h48M699 112.5h48M213 238.5h48M61 47l44 29M61 173l44 29M366 202l68-54M861 147l42 30" />
          <path d="M255 106l11 6-11 7zM417 106l11 6-11 7zM579 106l11 6-11 7zM741 106l11 6-11 7zM255 232l11 6-11 7zM98 65l6 11H92zM98 191l6 11H92zM422 150l12-2-5 12zM896 169l9 0 2 9-7 1z" />
          <circle cx="83" cy="61" r="6.5" fill="#80ff80" />
          <circle cx="83" cy="187" r="6.5" fill="#ff8080" />
          <circle cx="563" cy="111" r="6.5" fill="#ff8080" />
          <circle cx="883" cy="163" r="6.5" />
          {[[213, 111, '#f78eb2'], [267, 111, '#df8dd8'], [374, 111, '#df8dd8'], [429, 111, '#8dabdb'], [537, 111, '#8dabdb'], [591, 111, '#86b5bf'], [699, 111, '#86b5bf'], [753, 111, '#948ba2'], [213, 237, '#c9e8fb'], [267, 237, '#bf9fdc'], [366, 202, '#bf9fdc'], [436, 147, '#8dabdb'], [861, 147, '#948ba2']].map(([x, y, c]) => (
            <circle key={`${x}-${y}`} cx={x} cy={y} r="3" fill={c} />
          ))}
        </svg>
      </div>
      <HScroll thumb="left-[47%] w-[32%]" />
    </MdiWindow>
  )
}

/* ---------- evaluation radar ---------- */

const CX = 433
const CY = 316
const R = 198
const series = [
  { fill: '#f5e89c', dot: '#c0b272', v: [0.74, 0.19, 0, 0.573, 1, 0.218, 0.345, 0.813, 0.562, 0.372, 0] },
  { fill: '#93ec84', dot: '#6eaa5a', v: [0.645, 0.073, 0, 0.139, 0.8, 0.704, 0.91, 0.22, 0.133, 0.317, 0] },
  { fill: '#98e4e0', dot: '#68a49a', v: [0.695, 0.137, 0, 0.07, 0, 0.418, 0, 0.22, 0.07, 0.343, 0] },
]
const marks = [
  [433, 83, 'Average Operation Time', '[0.0-10.0Hours]'],
  [277, 114, 'Resource Manufacturing Utilization Rate', '[0.0-1.0%]'],
  [591, 114, 'Changeover Time Ratio', '[0.0-100.0%]'],
  [171, 199, 'Resource Utilization Rate', '[0.0-100.0%]'],
  [642, 199, 'Number of Changes', ''],
  [147, 353, 'Total Resource Idle Time', '[0.0-20000.0Hours]'],
  [215, 455, 'Average Production Lead Time', '[0.0-200.0Hours]'],
  [642, 455, 'Number of Overdue Ops', ''],
  [352, 515, 'Total Overdue Time', '[0.0-500.0Hours]'],
  [515, 515, 'Average Due Date Margin Time', '[0.0-100.0Hours]'],
]

function spoke(i, f) {
  const a = (i * 2 * Math.PI) / 11
  return [CX + Math.sin(a) * R * f, CY - Math.cos(a) * R * f]
}

function ring(values) {
  return values.map((f, i) => spoke(i, f).map((n) => n.toFixed(1)).join(',')).join(' ')
}

function EvaluationWindow() {
  return (
    <section className="absolute top-0 -right-3 left-[1001px] flex h-[611px] flex-col border-b border-l border-black bg-[#b9d1ea] pb-2.5 shadow-[inset_1px_-1px_0_#5cd8f4]">
      <div className="h-3 shrink-0 bg-linear-to-b from-[#a8c4e0] to-[#b9d1ea] pl-3">
        <div className="h-[3px] w-6 border-x-2 border-b-2 border-[#50545a] bg-white" />
      </div>
      <div className="relative ml-[11px] flex-1 overflow-hidden border-t border-l border-[#686c70] bg-white">
        <svg className="absolute inset-0 size-full font-['Noto_Sans_CJK_JP',sans-serif] text-[17px]" fill="none">
          {[0.2, 0.4, 0.6, 0.8].map((f) => (
            <polygon key={f} points={ring(Array(11).fill(f))} stroke="#404040" strokeWidth="1.2" strokeDasharray="5 3" />
          ))}
          <polygon points={ring(Array(11).fill(1))} stroke="#4646e4" strokeWidth="1.2" strokeDasharray="5 3" />
          {series[0].v.map((_, i) => {
            const [x, y] = spoke(i, 1)
            return <path key={i} d={`M${CX} ${CY}L${x} ${y}`} stroke="#8a8a8a" strokeWidth="1.8" />
          })}
          {series.map((s) => (
            <polygon key={s.fill} points={ring(s.v)} fill={s.fill} fillOpacity=".68" stroke={s.fill} strokeOpacity=".7" strokeWidth="2.5" />
          ))}
          {series.map((s) =>
            s.v.map((f, i) => {
              const [x, y] = spoke(i, f)
              return <circle key={s.dot + i} cx={x} cy={y} r="6" fill={s.dot} fillOpacity=".72" />
            })
          )}
          {marks.map(([x, y, a, b]) => (
            <text key={a} textAnchor="middle" fill="#111">
              <tspan x={x} y={y + 6}>{a}</tspan>
              <tspan x={x} y={y + 26}>{b}</tspan>
            </text>
          ))}
        </svg>
        <button type="button" aria-label="Refresh chart" className="absolute bottom-3.5 left-2">
          <Svg size="size-8"><Reload color="#566c7e" /></Svg>
        </button>
      </div>
    </section>
  )
}

/* ---------- right tool strip ---------- */

function Win({ x = 0, y = 0, w = 12, h = 12, color = '#1414dc' }) {
  return (
    <>
      <path d={`M${x} ${y}h${w}v${h}h-${w}z`} fill="#f0f0f0" stroke={color} strokeWidth="1.6" />
      <path d={`M${x} ${y + 1.5}h${w}`} stroke={color} strokeWidth="3.5" />
    </>
  )
}

function Blocks({ items }) {
  return (
    <Svg>
      {items.map(([x, y, w, h, c], i) => (
        <rect key={i} x={x} y={y} width={w} height={h} fill={c} />
      ))}
    </Svg>
  )
}

const B = '#1068f0'
const Y = '#fcf000'
const RED = '#f00c0c'

function Ramp({ color }) {
  return (
    <Svg>
      <path d="M8 12L25 0v12z" fill={color} stroke="#707070" />
      <path d="M14 16h12v10H14z" fill={color} stroke="#707070" />
      <path d="M0 12.5h26M0 27h27" stroke="#707070" strokeWidth="1.5" />
    </Svg>
  )
}

function RightTools() {
  const h = 'h-[38px]'
  return (
    <div className="flex w-[45px] shrink-0 flex-col">
      <div className="flex flex-col border-b border-l border-[#b4b4b4] border-l-white pt-1 pb-1.5">
        <span className="mx-1 h-0 border-t-2 border-dotted border-[#b0b0b0]" />
        <Tool label="Close window" className="h-[43px]"><Svg><Win x={4} y={3} w={20} h={20} /><path d="M1 1l26 26M27 1L1 27" stroke="#484848" strokeWidth="2.2" /></Svg></Tool>
        <Tool label="Link windows" className="h-[37px]"><Svg><path d="M1 1h26v26H1z" stroke="#707070" /><Win x={4} y={6} w={9} h={8} color="#8c8cec" /><Win x={15} y={6} w={9} h={8} color="#8c8cec" /><Win x={9} y={12} w={10} h={9} /></Svg></Tool>
        <Tool label="Float window" className={h}><Svg><Win x={1} y={2} w={15} h={14} color="#b8b8ec" /><Win x={9} y={9} w={18} h={15} color="#7878e8" /></Svg></Tool>
        <Tool label="Full screen" className="h-[37px]"><Svg><path d="M1 8V1h7M20 1h7v7M27 20v7h-7M8 27H1v-7" stroke="#8a8a8a" strokeWidth="1.8" /></Svg></Tool>
        <HSep />
        <Tool label="Tile" className={h}><Svg><path d="M1 1h26v26H1z" stroke="#707070" /><Win x={4} y={4} w={8} h={8} /><Win x={16} y={4} w={8} h={8} /><Win x={4} y={16} w={8} h={8} /><Win x={16} y={16} w={8} h={8} /></Svg></Tool>
        <Tool label="Tabs" className={h}><Svg><path d="M1 3h26v22H1zM1 8h26M10 3v5M18 3v5" stroke="#1414dc" strokeWidth="1.8" /><path d="M1 3h9v5H1z" fill="#1414dc" /></Svg></Tool>
        <HSep />
        <Tool label="Cascade" className={h}><Svg><Win x={1} y={1} w={15} h={15} /><Win x={6} y={6} w={15} h={15} /><Win x={11} y={12} w={16} h={15} /></Svg></Tool>
        <Tool label="Tile vertically" className={h}><Svg><Win x={1} y={1} w={11} h={26} /><Win x={16} y={1} w={11} h={26} /></Svg></Tool>
        <Tool label="Tile horizontally" className={h}><Svg><Win x={1} y={1} w={26} h={11} /><Win x={1} y={16} w={26} h={11} /></Svg></Tool>
        <HSep />
        <Tool label="Order Gantt" className={h}>
          <Svg>
            <path d="M4 5l18 18M18 5l9 8M4 14l8 10" stroke="#707070" />
            <path d="M1 2h7v6H1zM11 11h7v6h-7zM21 20h7v6h-7z" fill={B} /><path d="M14 2h6v6h-6zM21 11h6v6h-6z" fill={Y} /><path d="M0 11h6v6H0zM8 20h9v6H8z" fill={RED} />
          </Svg>
        </Tool>
        <Tool label="Resource Gantt" className={h}><Blocks items={[[4, 1, 7, 7, Y], [16, 1, 7, 7, Y], [0, 11, 8, 6, B], [10, 11, 8, 6, B], [20, 11, 8, 6, B], [2, 20, 8, 6, RED], [11, 20, 5, 6, RED], [18, 20, 9, 6, RED]]} /></Tool>
        <Tool label="Load chart" className={h}><Svg><path d="M1 21l11-12 6 7 9-9v15H1z" fill={B} /></Svg></Tool>
        <Tool label="Bar chart" className={h}><Blocks items={[[2, 5, 10, 17, '#c9c860'], [2, 5, 10, 1.5, '#6090b0'], [15, 11, 11, 11, '#c9c860'], [15, 10, 11, 1.5, '#6090b0'], [0, 22, 28, 1.5, '#707070']]} /></Tool>
        <Tool label="Schedule chart" className="h-[37px]"><Blocks items={[[0, 2, 27, 5, B], [20, 9, 7, 5, B], [10, 16, 8, 5, B], [0, 22, 8, 5, B]]} /></Tool>
        <HSep />
        <Tool label="Stock chart" className={h}><Ramp color="#32c832" /></Tool>
        <Tool label="Item chart" className={h}><Ramp color="#4796cc" /></Tool>
        <Tool label="Mixed chart" className={h}>
          <Svg>
            <path d="M0 1h10v6H0z" fill={RED} /><path d="M13 1h10v6H13z" fill={Y} /><path d="M1 17l10-6 6 4 10-10v12z" fill={B} /><path d="M3 19h10v7H3zM16 21h10v5H16z" fill="#c9c860" />
            <path d="M0 17.5h28M0 27h28" stroke="#707070" />
          </Svg>
        </Tool>
        <Tool label="List" className={h}>
          <Svg><path d="M7 0v28" stroke="#3c82ec" strokeWidth="13" strokeDasharray="2 1.5" /><path d="M21 0v5M21 10v16" stroke="#ec3c3c" strokeWidth="12" strokeDasharray="2 1.5" /></Svg>
        </Tool>
        <span className="mt-[3px] ml-2 w-0 border-y-4 border-r-5 border-y-transparent border-r-black" />
      </div>
    </div>
  )
}

/* ---------- shell ---------- */

const menus = ['File', 'Edit', 'Display(V)', 'Schedule', 'Graph (G)', 'Tools', 'Window', 'Help']

export default function App() {
  return (
    <div className="flex h-screen flex-col overflow-hidden border-t border-[#707070] bg-[#f0f0f0] font-['Noto_Sans',sans-serif] text-black">
      <header className="flex h-[45px] shrink-0 items-center bg-white pl-3">
        <Svg size="h-[22px] w-[23px]" box="0 0 23 22">
          <path d="M0 0h23v22H0z" fill="#151a5c" />
          <path d="M9 0v6H5M9 6v9M5 14h12M12 14V6h11M17 0v3M6 14v8" stroke="#f0f0f8" strokeWidth="1.2" />
        </Svg>
        <h1 className="ml-1.5 flex-1 text-[17px]">FLEXSCHE Evaluation Edition - Data5 - [Evaluation Chart]</h1>
        <Tool label="Minimize" className="h-10 w-[70px]"><Minus size={20} strokeWidth={1.25} /></Tool>
        <Tool label="Maximize" className="h-10 w-[70px]"><Square size={18} strokeWidth={1.5} /></Tool>
        <Tool label="Close" className="h-10 w-[70px]"><X size={22} strokeWidth={1.25} /></Tool>
      </header>
      <nav className="flex h-[27px] shrink-0 items-center gap-[13px] bg-white pt-px pl-2 text-[17px]">
        {menus.map((m) => (
          <button key={m} type="button">{m}</button>
        ))}
      </nav>
      <MainToolbar />
      <main className="flex min-h-0 flex-1">
        <LeftTools />
        <aside className="ml-px flex w-[197px] shrink-0 flex-col pt-px">
          <ProjectPanel />
          <SchedulingPanel />
        </aside>
        <div className="relative ml-[5px] min-w-0 flex-1 overflow-hidden border-t border-l border-[#6e6e6e] bg-[#ababab]">
          <GanttWindow />
          <OrderWindow />
          <ProcessWindow />
          <EvaluationWindow />
        </div>
        <RightTools />
      </main>
      <footer className="flex h-[27px] shrink-0 items-end justify-end border-t border-white p-0.5">
        <Svg size="size-3" box="0 0 12 12"><path d="M8 0h3v3H8zM4 4h3v3H4zM8 4h3v3H8zM0 8h3v3H0zM4 8h3v3H4zM8 8h3v3H8z" fill="#bcbcbc" /></Svg>
      </footer>
    </div>
  )
}
